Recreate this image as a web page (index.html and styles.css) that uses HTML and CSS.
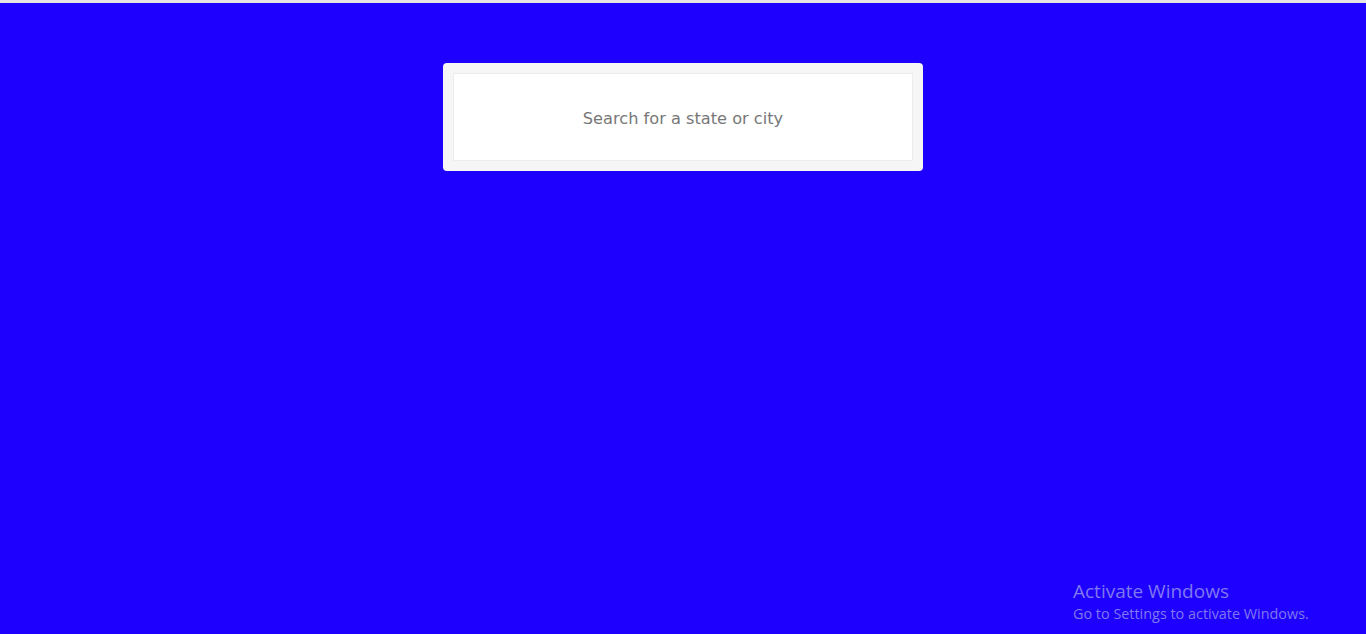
FILE: index.html
```html
<!DOCTYPE html>
<html lang="en">
<head>
<meta charset="utf-8">
<title>Search</title>
<link rel="stylesheet" href="styles.css">
</head>
<body>
<div class="topline"></div>
<main class="page">
  <div class="card">
    <input class="search" type="text" placeholder="Search for a state or city">
  </div>
</main>
<div class="watermark">
  <div class="wm-title">Activate Windows</div>
  <div class="wm-sub">Go to Settings to activate Windows.</div>
</div>
</body>
</html>
```
FILE: styles.css
```css
html, body {
  margin: 0;
  padding: 0;
  height: 100%;
}
body {
  background: #1e00ff;
  font-family: "DejaVu Sans", "Open Sans", sans-serif;
  overflow: hidden;
}
.topline {
  height: 3px;
  background: #e4e4e4;
}
.page {
  display: flex;
  justify-content: center;
  padding-top: 60px;
}
.card {
  width: 460px;
  padding: 10px;
  background: #f6f6f6;
  border-radius: 4px;
}
.search {
  display: block;
  box-sizing: border-box;
  width: 100%;
  height: 88px;
  padding: 2px 0 0;
  border: 1px solid #ececec;
  background: #fff;
  text-align: center;
  font-family: "DejaVu Sans", sans-serif;
  font-size: 16.2px;
  color: #777;
  outline: none;
}
.search::placeholder {
  color: #777;
}
.watermark {
  position: absolute;
  left: 1073px;
  top: 578px;
  color: #7f78f0;
  font-family: "Open Sans", "Noto Sans", sans-serif;
}
.wm-title {
  font-size: 19px;
  line-height: 26px;
}
.wm-sub {
  font-size: 14.4px;
  line-height: 20px;
}
```
